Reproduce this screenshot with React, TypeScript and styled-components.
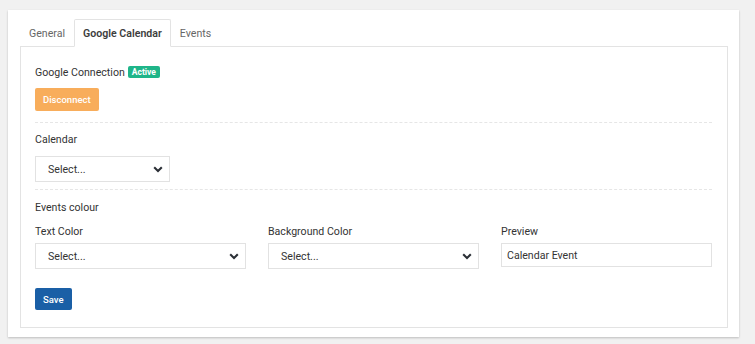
import * as React from 'react';
import styled, { createGlobalStyle } from 'styled-components';

const GlobalStyle = createGlobalStyle`
    html, body {
        margin: 0;
        padding: 0;
        background: #f1f1f1;
        font-family: Roboto, "Liberation Sans", Arial, sans-serif;
        font-size: 10.6px;
        color: #333;
    }
`;

const Page = styled.div`
    padding: 10px 16px 7px 8px;
`;

const Card = styled.div`
    background: #fff;
    padding: 9px 11px 9px 12px;
    box-shadow: 0 1px 2px rgba(0, 0, 0, 0.22);
`;

const TabBar = styled.div`
    display: flex;
    height: 27px;
    border-bottom: 1px solid #e3e3e3;
`;

const Tab = styled.div<{ active?: boolean }>`
    display: flex;
    align-items: center;
    padding: 0 8px;
    margin-bottom: -1px;
    height: 28px;
    box-sizing: border-box;
    font-weight: ${p => (p.active ? 600 : 400)};
    color: ${p => (p.active ? '#3d3d3d' : '#666')};
    background: ${p => (p.active ? '#fff' : 'transparent')};
    border: 1px solid ${p => (p.active ? '#e3e3e3' : 'transparent')};
    border-bottom-color: ${p => (p.active ? '#fff' : 'transparent')};
    border-radius: 2px 2px 0 0;
`;

const Panel = styled.div`
    border: 1px solid #e3e3e3;
    border-top: none;
    padding: 17px 15px 17px 14px;
`;

const Line = styled.div`
    display: flex;
    align-items: center;
    gap: 3px;
    height: 16px;
`;

const Badge = styled.span`
    background: #1fb589;
    color: #fff;
    font-size: 8.5px;
    font-weight: 700;
    padding: 0 4px;
    height: 12px;
    line-height: 12px;
    border-radius: 2px;
`;

const Button = styled.button<{ tone: 'warn' | 'primary' }>`
    display: block;
    border: none;
    border-radius: 2px;
    font-family: inherit;
    font-size: 9.5px;
    font-weight: 500;
    color: #fff;
    padding: 0 8px;
    height: ${p => (p.tone === 'warn' ? '23px' : '22px')};
    margin-top: ${p => (p.tone === 'warn' ? '8px' : '19px')};
    background: ${p => (p.tone === 'warn' ? '#f8ad5b' : '#1a5fa6')};
`;

const Divider = styled.hr<{ top: number }>`
    border: none;
    border-top: 1px dashed #e6e6e6;
    margin: ${p => p.top}px 0 0;
`;

const Heading = styled(Line)<{ top: number }>`
    margin-top: ${p => p.top}px;
`;

const SelectBox = styled.div<{ width?: number; top?: number }>`
    display: flex;
    align-items: center;
    justify-content: space-between;
    box-sizing: border-box;
    width: ${p => (p.width ? `${p.width}px` : '100%')};
    height: 26px;
    margin-top: ${p => p.top ?? 0}px;
    border: 1px solid #e2e2e2;
    padding: 0 6px 0 12px;
    color: #333;
`;

const Grid = styled.div`
    display: grid;
    grid-template-columns: repeat(3, 1fr);
    column-gap: 22px;
    margin-top: 8px;
`;

const Field = styled.div`
    display: flex;
    flex-direction: column;
    gap: 4px;
`;

const TextBox = styled.div`
    display: flex;
    align-items: center;
    box-sizing: border-box;
    height: 24px;
    border: 1px solid #e2e2e2;
    padding: 0 5px;
    color: #333;
`;

const Chevron = () => (
    <svg width="10" height="7" viewBox="0 0 10 7">
        <path d="M1.2 1.3 L5 5 L8.8 1.3" fill="none" stroke="#2b2f36" strokeWidth="2.1" />
    </svg>
);

const Select: React.FC<{ width?: number; top?: number }> = ({ width, top }) => (
    <SelectBox width={width} top={top}>
        <span>Select...</span>
        <Chevron />
    </SelectBox>
);

export default function App() {
    return (
        <Page>
            <GlobalStyle />
            <Card>
                <TabBar>
                    <Tab>General</Tab>
                    <Tab active>Google Calendar</Tab>
                    <Tab>Events</Tab>
                </TabBar>
                <Panel>
                    <Line>
                        Google Connection <Badge>Active</Badge>
                    </Line>
                    <Button tone="warn">Disconnect</Button>
                    <Divider top={11} />
                    <Heading top={8}>Calendar</Heading>
                    <Select width={135} top={9} />
                    <Divider top={7} />
                    <Heading top={9}>Events colour</Heading>
                    <Grid>
                        <Field>
                            <Line>Text Color</Line>
                            <Select />
                        </Field>
                        <Field>
                            <Line>Background Color</Line>
                            <Select />
                        </Field>
                        <Field>
                            <Line>Preview</Line>
                            <TextBox>Calendar Event</TextBox>
                        </Field>
                    </Grid>
                    <Button tone="primary">Save</Button>
                </Panel>
            </Card>
        </Page>
    );
}
